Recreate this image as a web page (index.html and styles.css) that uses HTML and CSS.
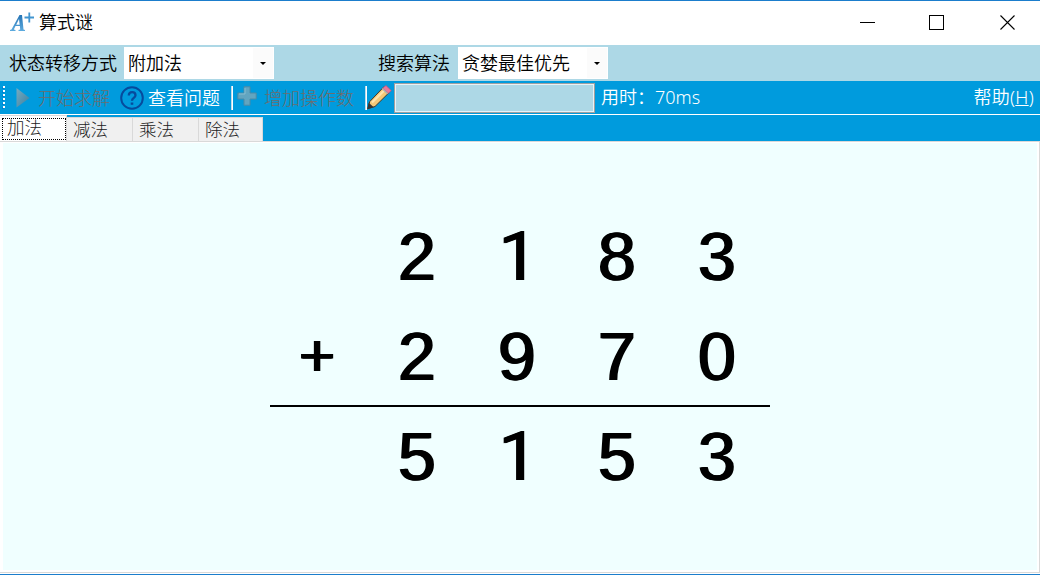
FILE: index.html
```html
<!DOCTYPE html>
<html lang="zh-CN">
<head>
<meta charset="utf-8">
<title>算式谜</title>
<link rel="stylesheet" href="styles.css">
</head>
<body>
<div class="window">
  <header class="titlebar">
    <svg class="logo" width="24" height="22" viewBox="0 0 24 22">
      <defs><linearGradient id="ink" x1="0" y1="0" x2="0" y2="1"><stop offset="0" stop-color="#2573b4"/><stop offset="1" stop-color="#5dabdf"/></linearGradient></defs>
      <path fill="url(#ink)" fill-rule="evenodd" d="M0 20v-1l1.500-.5L9.500 4H12l1.500 14.500 1.500.5v1H8.500v-1l1.700-.5-.3-3.500H5.500l-1.700 3.500 1.700.5v1zM6.200 13.700h3.500L9 7.900z"/>
      <path fill="none" stroke="#4195d0" stroke-width="1.800" d="M14.500 6.500H24M19.300 1.500v10"/>
    </svg>
    <h1 class="title">算式谜</h1>
    <div class="controls">
      <svg width="15" height="15"><path d="M0 7.500h15" stroke="#000"/></svg>
      <svg width="15" height="15"><rect x=".5" y=".5" width="14" height="14" fill="none" stroke="#000"/></svg>
      <svg width="15" height="15"><path d="M.5.5l14 14M14.500.5l-14 14" stroke="#000" stroke-width="1.100"/></svg>
    </div>
  </header>
  <div class="options">
    <label class="option-label">状态转移方式</label>
    <div class="select"><span>附加法</span><i class="drop"></i></div>
    <label class="option-label search-label">搜索算法</label>
    <div class="select"><span>贪婪最佳优先</span><i class="drop"></i></div>
  </div>
  <div class="toolbar">
    <svg class="grip" width="4" height="24"><path d="M2 1v23" stroke="#008" stroke-opacity=".15" stroke-width="2" stroke-dasharray="2 2"/><path d="M3 0v24" stroke="#fff" stroke-width="2" stroke-dasharray="2 2"/></svg>
    <svg class="play" width="14" height="22" viewBox="0 0 14 22"><defs><linearGradient id="steel" x1="0" y1="0" x2="1" y2="1"><stop offset="0" stop-color="#79abc0"/><stop offset="1" stop-color="#397fa0"/></linearGradient></defs><path d="M.5 1v19.500L13.500 11z" fill="url(#steel)"/></svg>
    <span class="tool start disabled">开始求解</span>
    <svg class="help-icon" width="24" height="24" viewBox="0 0 24 24" fill="none" stroke="#064b9d"><circle cx="12" cy="12" r="10.800" stroke-width="2"/><path d="M8.800 9.500c0-4.600 6.700-4.300 6.700-.3 0 2.700-3.500 2.700-3.500 5.600" stroke-width="2.300"/><path d="M12 16.500v2.300" stroke-width="2.600"/></svg>
    <span class="tool view">查看问题</span>
    <i class="separator"></i>
    <svg class="plus" width="20" height="20" viewBox="0 0 20 20"><path d="M7 .8h6V7h6.200v6H13v6.200H7V13H.8V7H7z" fill="#62a5c0" stroke="#4a8aa7"/><path d="M8 2v6H2" fill="none" stroke="#85bdd0"/></svg>
    <span class="tool add disabled">增加操作数</span>
    <i class="separator"></i>
    <svg class="pencil" width="25" height="25" viewBox="0 0 25 25"><path d="M.6 23.800L2.800 16.500 16.500 2.200l5.600 5.400L8 21.500z" fill="#f4c878" stroke="#42382a"/><path d="M5 17.500L18.500 4.200" stroke="#ffe4ad" stroke-width="2.200"/><path d="M15.700 3L19 .5 24.300 5.600 21.500 8.300z" fill="#eb779c" stroke="#b4537b" stroke-width=".7"/><path d="M15.200 3.500l5.500 5.300" stroke="#a9aeb5" stroke-width="1.500"/><path d="M.5 24l1.200-6.300 5.100 4.500z" fill="#343434"/></svg>
    <div class="progress"></div>
    <span class="tool time">用时：70ms</span>
    <span class="tool help">帮助(<u>H</u>)</span>
  </div>
  <nav class="tabs">
    <div class="tab active"><span>加法</span></div>
    <div class="tab">减法</div>
    <div class="tab">乘法</div>
    <div class="tab">除法</div>
  </nav>
  <main class="page">
    <div class="sheet">
      <div class="sum">
        <div class="row"><b></b><b>2</b><b class="one">1</b><b>8</b><b>3</b></div>
        <div class="row"><b class="sign">+</b><b>2</b><b>9</b><b>7</b><b>0</b></div>
        <div class="row result"><b></b><b>5</b><b class="one">1</b><b>5</b><b>3</b></div>
      </div>
    </div>
  </main>
</div>
</body>
</html>
```
FILE: styles.css
```css
* { box-sizing: border-box; }
body {
  margin: 0;
  font: 300 18px/24px "Noto Sans CJK SC", sans-serif;
  color: #000;
}
svg { display: block; flex: none; }
.window {
  width: 1040px;
  height: 575px;
  display: flex;
  flex-direction: column;
  border-top: 1px solid #1b7dcc;
  border-bottom: 1px solid #1b7dcc;
  background: #fff;
  overflow: hidden;
}
.titlebar { height: 44px; flex: none; display: flex; align-items: center; padding: 0 25px 2px 10px; }
.logo { margin-right: 5px; }
.title { margin: 0; padding-bottom: 2px; font-size: 18px; font-weight: 350; }
.controls { margin-left: auto; display: flex; gap: 54px; }
.controls svg:last-child { margin-left: 2px; }
.options { height: 36px; flex: none; display: flex; align-items: center; background: #add8e6; padding-left: 9px; font-weight: 350; }
.option-label { width: 115px; white-space: nowrap; padding-bottom: 2px; }
.select span { padding-bottom: 2px; }
.search-label { width: 80px; margin-left: 104px; }
.select { width: 150px; height: 32px; background: #fff; display: flex; align-items: center; justify-content: space-between; padding: 0 1px 0 4px; }
.drop { width: 20px; height: 30px; background: #fbfbfb; display: flex; align-items: center; justify-content: center; }
.drop::after { content: ""; border: 3px solid transparent; border-top-color: #000; border-bottom: 0; }
.toolbar { height: 34px; flex: none; display: flex; align-items: center; background: #009bdd; border-bottom: 1px solid #fff; color: #fff; white-space: nowrap; }
.tool { padding-bottom: 2px; }
.grip { margin: 0 11px 0 1px; }
.play { margin-right: 8px; }
.disabled { color: #6d6d6d; }
.start { width: 82px; }
.help-icon { margin-right: 4px; }
.view { width: 83px; font-weight: 350; }
.separator { width: 2px; height: 24px; background: #fff; border-left: 1px solid #bdd9ea; flex: none; }
.plus { margin: 0 7px 4px 4px; }
.add { width: 101px; }
.pencil { margin: 0 2px 0 0; }
.progress { width: 201px; height: 30px; background: #add8e6; border: 1px solid #a0a0a0; box-shadow: inset 0 0 0 1px #e8f2f6; margin-right: 6px; flex: none; }
.time, .help { font-family: "Noto Sans", "Noto Sans CJK SC", sans-serif; font-weight: 350; }
.help { margin-left: auto; padding-right: 6px; letter-spacing: .3px; }
.tabs { height: 26px; flex: none; display: flex; background: #009bdd; font-size: 17.5px; }
.tab { width: 66px; height: 24px; margin-top: 2px; padding-left: 6px; border: solid #d9d9d9; border-width: 1px 1px 0 0; background: #f0f0f0; line-height: 21px; color: #222; }
.tab:last-child { width: 64px; }
.tab.active { width: 67px; height: 26px; margin-top: 0; padding: 2px 0 0 2px; background: #fff; }
.active span { display: block; height: 22px; padding-left: 4px; border: 1px dotted #000; line-height: 16px; }
.page { flex: 1; background: #fff; border: solid #d9d9d9; border-width: 1px 1px 1px 0; margin-bottom: 1px; padding: 1px 2px 2px 3px; }
.sheet { height: 100%; background: #f0ffff; padding: 62px 0 0 267px; }
.sum { width: 500px; font: 400 68px/102px "Liberation Sans", Arial, sans-serif; text-shadow: 1px 0, 2px 0; }
.row { display: grid; grid-template-columns: repeat(5, 100px); height: 100px; text-align: center; }
.row b { font-weight: 400; padding-right: 8px; }
.row .sign { font-size: 62px; line-height: 100px; padding-right: 8px; }
.row .one { font-family: Roboto, "Liberation Sans", sans-serif; line-height: 105px; padding-right: 6px; text-shadow: 1px 0, 2px 0; }
.result { border-top: 2px solid #000; line-height: 98px; }
.result .one { line-height: 101px; }
```
